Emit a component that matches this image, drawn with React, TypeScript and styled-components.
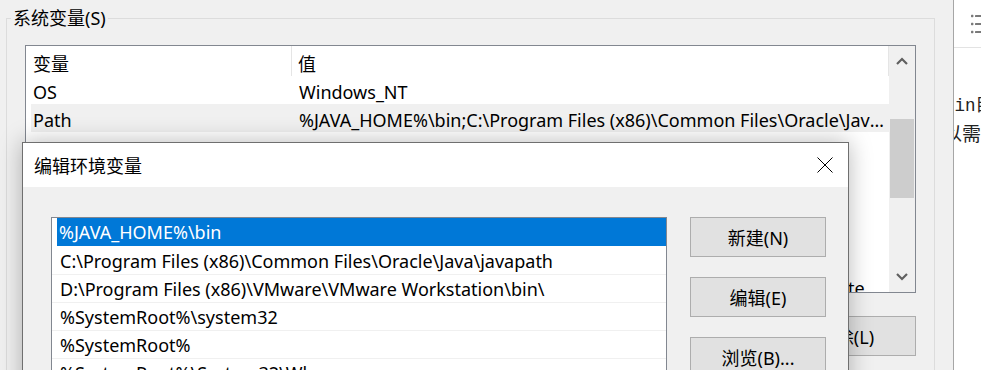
import styled, { createGlobalStyle } from 'styled-components';

const UI_FONT = `'Noto Sans', 'Noto Sans CJK SC', sans-serif`;

const GlobalStyle = createGlobalStyle`
  html, body {
    margin: 0;
    padding: 0;
  }
  body {
    width: 981px;
    height: 370px;
    overflow: hidden;
    background: #f0f0f0;
    font-family: ${UI_FONT};
    color: #000;
  }
`;

interface SysVar {
  name: string;
  value: string;
}

const sysVars: SysVar[] = [
  { name: 'OS', value: 'Windows_NT' },
  {
    name: 'Path',
    value:
      '%JAVA_HOME%\\bin;C:\\Program Files (x86)\\Common Files\\Oracle\\Java\\javapath;D:\\Program Files (x86)\\VMware\\VMware Workstation\\bin\\',
  },
  { name: 'PATHEXT', value: '.COM;.EXE;.BAT;.CMD;.VBS;.VBE;.JS;.JSE;.WSF;.WSH;.MSC' },
  { name: 'PROCESSOR_ARCHITECTURE', value: 'AMD64' },
  { name: 'PROCESSOR_IDENTIFIER', value: 'Intel64 Family 6 Model 158 Stepping 10, GenuineIntel' },
  { name: 'PROCESSOR_LEVEL', value: '6' },
  { name: 'PROCESSOR_REVISION', value: '9e0a' },
  {
    name: 'PSModulePath',
    value:
      '%ProgramFiles%\\WindowsPowerShell\\Modules;C:\\WINDOWS\\system32\\WindowsPowerShell\\v1.0\\Modules',
  },
  { name: 'TEMP', value: 'C:\\WINDOWS\\TEMP' },
];

const pathEntries = [
  '%JAVA_HOME%\\bin',
  'C:\\Program Files (x86)\\Common Files\\Oracle\\Java\\javapath',
  'D:\\Program Files (x86)\\VMware\\VMware Workstation\\bin\\',
  '%SystemRoot%\\system32',
  '%SystemRoot%',
  '%SystemRoot%\\System32\\Wbem',
];

const App = () => {
  return (
    <>
      <GlobalStyle />
      <Desktop>
        <MainWindow>
          <GroupBox>
            <Legend>系统变量(S)</Legend>
            <VarList>
              <VarArea>
                <HeaderRow>
                  <HeaderCell>变量</HeaderCell>
                  <HeaderCell>值</HeaderCell>
                </HeaderRow>
                {sysVars.map((v) => (
                  <VarRow key={v.name} selected={v.name === 'Path'}>
                    <VarCell>{v.name}</VarCell>
                    <VarCell>{v.value}</VarCell>
                  </VarRow>
                ))}
              </VarArea>
              <ScrollBar>
                <ArrowBox>
                  <Chevron up />
                </ArrowBox>
                <Track>
                  <Thumb />
                </Track>
                <ArrowBox>
                  <Chevron />
                </ArrowBox>
              </ScrollBar>
            </VarList>
            <ButtonRow>
              <WinButton width={140}>新建(W)...</WinButton>
              <WinButton width={140}>编辑(I)...</WinButton>
              <WinButton width={140}>删除(L)</WinButton>
            </ButtonRow>
          </GroupBox>
        </MainWindow>

        <EditorBehind>
          <EditorToolbar>
            <ListIcon />
          </EditorToolbar>
          <EditorBody>
            <CodeLine>bin目录</CodeLine>
            <ProseLine>以需要</ProseLine>
          </EditorBody>
        </EditorBehind>

        <Dialog>
          <TitleBar>
            <Title>编辑环境变量</Title>
            <CloseButton>
              <svg width="16" height="16" viewBox="0 0 16 16">
                <path d="M0.5 0.5 L15.5 15.5 M15.5 0.5 L0.5 15.5" stroke="#000" strokeWidth="1" fill="none" />
              </svg>
            </CloseButton>
          </TitleBar>
          <DialogBody>
            <PathList>
              {pathEntries.map((p, i) => (
                <PathItem key={p} selected={i === 0}>
                  <PathText selected={i === 0}>{p}</PathText>
                </PathItem>
              ))}
            </PathList>
            <ButtonColumn>
              <WinButton width={136}>新建(N)</WinButton>
              <WinButton width={136}>编辑(E)</WinButton>
              <WinButton width={136}>浏览(B)...</WinButton>
            </ButtonColumn>
          </DialogBody>
        </Dialog>
      </Desktop>
    </>
  );
};

const Chevron = ({ up }: { up?: boolean }) => (
  <svg width="12" height="8" viewBox="0 0 12 8" style={{ display: 'block' }}>
    <path
      d={up ? 'M1 7 L6 2 L11 7' : 'M1 1 L6 6 L11 1'}
      stroke="#606060"
      strokeWidth="2.2"
      fill="none"
    />
  </svg>
);

const ListIcon = () => (
  <svg width="12" height="20" viewBox="0 0 12 20" style={{ display: 'block' }}>
    {[2, 10, 18].map((y) => (
      <g key={y} fill="#7a7a7a">
        <rect x="0" y={y - 1.2} width="2.4" height="2.4" rx="0.6" />
        <rect x="4" y={y - 1.1} width="10" height="2.2" rx="0.6" />
      </g>
    ))}
  </svg>
);

const Desktop = styled.div`
  position: relative;
  display: flex;
  width: 981px;
  height: 370px;
  overflow: hidden;
`;

const MainWindow = styled.div`
  width: 954px;
  flex: none;
  box-sizing: border-box;
  padding: 7px 18px 0 6px;
  background: #f0f0f0;
  border-right: 1px solid #a6a6a6;
`;

const GroupBox = styled.fieldset`
  margin: 0;
  padding: 16px 18px 0 18px;
  border: 1px solid #dcdcdc;
  height: 400px;
  box-sizing: border-box;
`;

const Legend = styled.legend`
  margin-left: -14px;
  padding: 0 2px;
  font-size: 18px;
  line-height: 22px;
`;

const VarList = styled.div`
  display: grid;
  grid-template-columns: 1fr 26px;
  height: 248px;
  box-sizing: border-box;
  border: 1px solid #828790;
  background: #fff;
`;

const VarArea = styled.div`
  overflow: hidden;
  font-size: 18px;
`;

const HeaderRow = styled.div`
  display: grid;
  grid-template-columns: 266px 1fr;
  height: 30px;
`;

const HeaderCell = styled.div`
  display: flex;
  align-items: center;
  padding: 3px 0 0 7px;
  border-right: 1px solid #e5e5e5;
  white-space: nowrap;
  &:last-child {
    padding-left: 6px;
  }
`;

const VarRow = styled.div<{ selected?: boolean }>`
  display: grid;
  grid-template-columns: 261px 1fr;
  height: 28px;
  box-sizing: border-box;
  padding-top: 4px;
  margin-left: 5px;
  align-items: center;
  background: ${(p) => (p.selected ? '#f0f0f0' : 'transparent')};
`;

const VarCell = styled.div`
  padding-left: 2px;
  white-space: nowrap;
  overflow: hidden;
  text-overflow: ellipsis;
  &:last-child {
    padding-left: 7px;
  }
`;

const ScrollBar = styled.div`
  display: flex;
  flex-direction: column;
  background: #f0f0f0;
`;

const ArrowBox = styled.div`
  height: 30px;
  display: flex;
  align-items: center;
  justify-content: center;
  flex: none;
`;

const Track = styled.div`
  flex: 1;
  padding: 43px 1px 0 1px;
`;

const Thumb = styled.div`
  height: 79px;
  background: #cdcdcd;
`;

const ButtonRow = styled.div`
  display: flex;
  justify-content: flex-end;
  gap: 12px;
  margin-top: 23px;
`;

const WinButton = styled.div<{ width: number }>`
  width: ${(p) => p.width}px;
  height: 40px;
  box-sizing: border-box;
  display: flex;
  align-items: center;
  justify-content: center;
  background: #e1e1e1;
  border: 1px solid #adadad;
  font-size: 18px;
  white-space: nowrap;
`;

const EditorBehind = styled.div`
  flex: 1;
  background: #fff;
  overflow: hidden;
  display: flex;
  flex-direction: column;
`;

const EditorToolbar = styled.div`
  height: 48px;
  flex: none;
  box-sizing: border-box;
  border-bottom: 1px solid #e3e3e3;
  padding: 14px 0 0 17px;
`;

const EditorBody = styled.div`
  padding-top: 46px;
  display: flex;
  flex-direction: column;
`;

const CodeLine = styled.div`
  font-family: 'Liberation Mono', 'Noto Sans CJK SC', monospace;
  font-size: 17.5px;
  line-height: 24px;
  margin-left: -10px;
  white-space: nowrap;
  color: #222;
`;

const ProseLine = styled.div`
  font-family: 'Noto Sans CJK SC', sans-serif;
  font-size: 19px;
  line-height: 26px;
  margin-left: -11px;
  padding-top: 2px;
  white-space: nowrap;
  color: #222;
`;

const Dialog = styled.div`
  position: absolute;
  left: 22px;
  top: 142px;
  width: 827px;
  height: 260px;
  box-sizing: border-box;
  border: 1px solid #6f6f6f;
  background: #f0f0f0;
  box-shadow: 0 0 22px rgba(0, 0, 0, 0.28);
  display: flex;
  flex-direction: column;
`;

const TitleBar = styled.div`
  height: 44px;
  flex: none;
  background: #fff;
  display: flex;
  align-items: center;
  justify-content: space-between;
  padding-left: 11px;
`;

const Title = styled.div`
  font-size: 18px;
`;

const CloseButton = styled.div`
  width: 46px;
  height: 44px;
  display: flex;
  align-items: center;
  justify-content: center;
`;

const DialogBody = styled.div`
  display: flex;
  gap: 23px;
  padding: 30px 21px 0 28px;
`;

const PathList = styled.div`
  width: 616px;
  height: 200px;
  box-sizing: border-box;
  border: 1px solid #828790;
  background: #fff;
  font-size: 18px;
`;

const PathItem = styled.div<{ selected?: boolean }>`
  height: ${(p) => (p.selected ? 29 : 28)}px;
  box-sizing: border-box;
  border-bottom: 1px solid ${(p) => (p.selected ? '#fff' : '#f0f0f0')};
  display: flex;
`;

const PathText = styled.div<{ selected?: boolean }>`
  flex: 1;
  margin-left: 5px;
  padding-left: ${(p) => (p.selected ? 2 : 3)}px;
  display: flex;
  align-items: center;
  white-space: nowrap;
  background: ${(p) => (p.selected ? '#0078d7' : 'transparent')};
  color: ${(p) => (p.selected ? '#fff' : '#000')};
`;

const ButtonColumn = styled.div`
  display: flex;
  flex-direction: column;
  gap: 20px;
`;

export default App;
